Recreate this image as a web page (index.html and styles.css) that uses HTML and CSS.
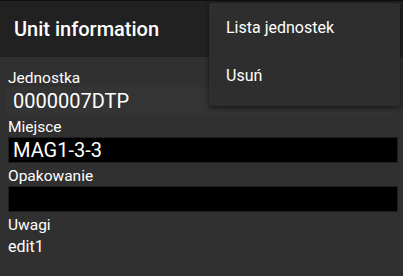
FILE: index.html
```html
<!DOCTYPE html>
<html lang="pl">
<head>
  <meta charset="UTF-8" />
  <meta name="viewport" content="width=device-width, initial-scale=1.0"/>
  <title>Unit information</title>
  <link rel="stylesheet" href="styles.css">
</head>
<body>

  <header class="toolbar">
    <h1>Unit information</h1>
  </header>

  <!-- Overflow menu -->
  <div class="popup-menu">
    <div class="menu-item">Lista jednostek</div>
    <div class="menu-item">Usuń</div>
  </div>

  <div class="unit-form">
    <div class="field-label">Jednostka</div>
    <div class="field-value">0000007DTP</div>

    <div class="field-label">Miejsce</div>
    <div class="field-input">MAG1-3-3</div>

    <div class="field-label">Opakowanie</div>
    <div class="field-input"></div>

    <div class="field-label">Uwagi</div>
    <div class="field-note">edit1</div>
  </div>

</body>
</html>
```

FILE: styles.css
```css
:root {
  --toolbar: #212121;
  --background: #303030;
  --menu: #2e2e2e;
  --text: #ffffff;
}

body {
  margin: 0;
  font-family: Roboto, "Noto Sans", sans-serif;
  background-color: var(--background);
  color: var(--text);
  overflow: hidden;
}

.toolbar {
  height: 56px;
  border-top: 1px solid #0e0e0e;
  background-color: var(--toolbar);
  display: flex;
  align-items: center;
  padding-left: 14px;
}

.toolbar h1 {
  margin: 0;
  font-size: 20px;
  font-weight: 500;
  padding-bottom: 1px;
}

.popup-menu {
  position: absolute;
  top: 3px;
  left: 209px;
  width: 191px;
  height: 103px;
  background-color: var(--menu);
  border-radius: 2px;
  box-shadow: 0 3px 6px rgba(0,0,0,0.35), 0 1px 3px rgba(0,0,0,0.3);
}

.menu-item {
  height: 48px;
  display: flex;
  align-items: center;
  padding-left: 17px;
  font-size: 16px;
}

.unit-form {
  padding: 13px 5px 0 8px;
  display: flex;
  flex-direction: column;
}

.field-label {
  font-size: 15.5px;
  line-height: 16px;
}

.field-value {
  margin: 1px 0 4px -1px;
  height: 28px;
  padding-left: 6px;
  background-color: #343434;
  font-size: 20px;
  line-height: 28px;
}

.field-input {
  margin: 2px 0 5px;
  height: 24px;
  border: 1px solid #1e1e1e;
  background-color: #000;
  padding-left: 4px;
  font-size: 20px;
  line-height: 25px;
}

.field-note {
  margin-top: 6px;
  font-size: 16px;
  line-height: 16px;
}
```
